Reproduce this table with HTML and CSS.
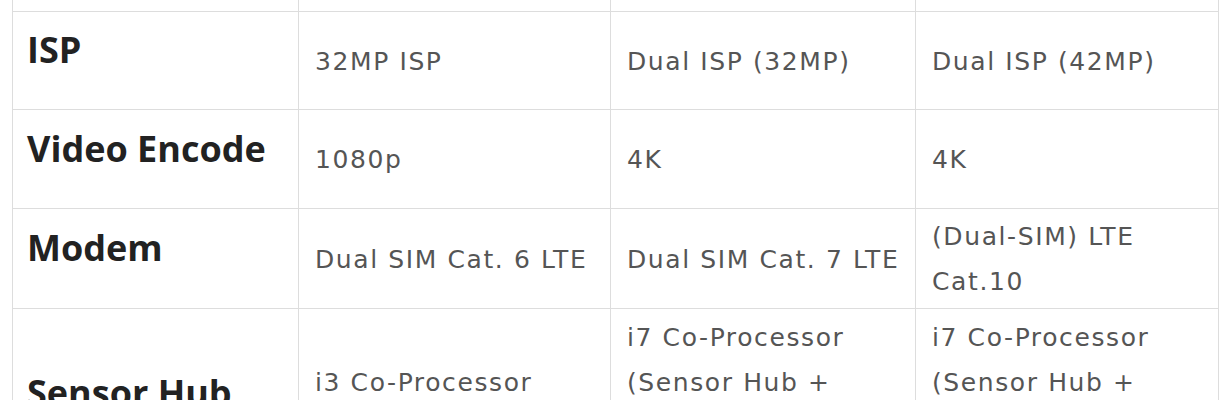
FILE: index.html
```html
<!DOCTYPE html>
<html>
<head>
<meta charset="utf-8">
<link rel="stylesheet" href="styles.css">
</head>
<body>
<div class="wrap">
<table class="spec">
  <colgroup>
    <col class="c1"><col class="c2"><col class="c3"><col class="c4">
  </colgroup>
  <tbody>
    <tr class="stub">
      <td></td><td></td><td></td><td></td>
    </tr>
    <tr>
      <th><span class="label">ISP</span></th>
      <td>32MP ISP</td>
      <td>Dual ISP (32MP)</td>
      <td>Dual ISP (42MP)</td>
    </tr>
    <tr class="r99">
      <th><span class="label">Video Encode</span></th>
      <td>1080p</td>
      <td>4K</td>
      <td>4K</td>
    </tr>
    <tr class="r100">
      <th><span class="label">Modem</span></th>
      <td>Dual SIM Cat. 6 LTE</td>
      <td>Dual SIM Cat. 7 LTE</td>
      <td>(Dual-SIM) LTE Cat.10</td>
    </tr>
    <tr class="tall">
      <th><span class="label">Sensor Hub</span></th>
      <td>i3 Co-Processor (Sensor Hub)</td>
      <td>i7 Co-Processor (Sensor Hub + Always-on Processor)</td>
      <td>i7 Co-Processor (Sensor Hub + Always-on Processor)</td>
    </tr>
  </tbody>
</table>
</div>
</body>
</html>
```

FILE: styles.css
```css
html, body {
  margin: 0;
  padding: 0;
  background: #ffffff;
}
.wrap {
  padding-left: 12px;
}
.spec {
  border-collapse: collapse;
  table-layout: fixed;
  width: 1206px;
}
.c1 { width: 286px; }
.c2 { width: 312px; }
.c3 { width: 305px; }
.c4 { width: 303px; }
.spec th, .spec td {
  border: 1px solid #dddddd;
  height: 98px;
  box-sizing: border-box;
  vertical-align: middle;
  text-align: left;
}
.spec tr.r99 th, .spec tr.r99 td {
  height: 99px;
}
.spec tr.r100 th, .spec tr.r100 td {
  height: 100px;
}
.spec tr.stub td {
  border-top: none;
  height: 11px;
  padding: 0;
}
.spec th {
  padding: 4px 14px;
  font-family: "Open Sans", "Liberation Sans", sans-serif;
  font-weight: 700;
  font-size: 36px;
  line-height: 48px;
  color: #222222;
}
.label {
  display: block;
  margin-bottom: 20px;
}
.spec td {
  padding: 4px 14px 2px 16px;
  font-family: "DejaVu Sans", Verdana, sans-serif;
  font-size: 25px;
  letter-spacing: 1.6px;
  line-height: 45px;
  color: #555555;
}
.spec tr.tall td {
  padding-top: 6px;
}
```
